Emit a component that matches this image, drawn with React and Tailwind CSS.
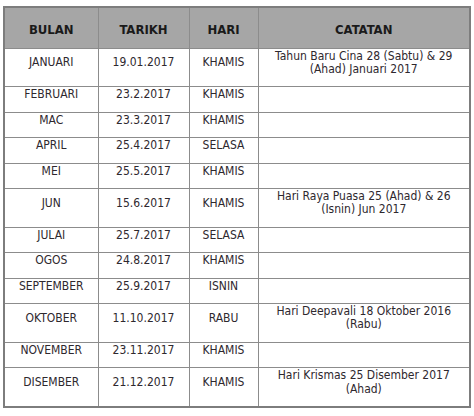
import React from 'react';

const rows = [
    { bulan: 'JANUARI', tarikh: '19.01.2017', hari: 'KHAMIS', catatan: ['Tahun Baru Cina 28 (Sabtu) & 29', '(Ahad) Januari 2017'] },
    { bulan: 'FEBRUARI', tarikh: '23.2.2017', hari: 'KHAMIS' },
    { bulan: 'MAC', tarikh: '23.3.2017', hari: 'KHAMIS' },
    { bulan: 'APRIL', tarikh: '25.4.2017', hari: 'SELASA' },
    { bulan: 'MEI', tarikh: '25.5.2017', hari: 'KHAMIS' },
    { bulan: 'JUN', tarikh: '15.6.2017', hari: 'KHAMIS', catatan: ['Hari Raya Puasa 25 (Ahad) & 26', '(Isnin) Jun 2017'] },
    { bulan: 'JULAI', tarikh: '25.7.2017', hari: 'SELASA' },
    { bulan: 'OGOS', tarikh: '24.8.2017', hari: 'KHAMIS' },
    { bulan: 'SEPTEMBER', tarikh: '25.9.2017', hari: 'ISNIN' },
    { bulan: 'OKTOBER', tarikh: '11.10.2017', hari: 'RABU', catatan: ['Hari Deepavali 18 Oktober 2016', '(Rabu)'] },
    { bulan: 'NOVEMBER', tarikh: '23.11.2017', hari: 'KHAMIS' },
    { bulan: 'DISEMBER', tarikh: '21.12.2017', hari: 'KHAMIS', catatan: ['Hari Krismas 25 Disember 2017', '(Ahad)'] },
];

const headers = ['BULAN', 'TARIKH', 'HARI', 'CATATAN'];

function App() {
    const cell = 'border border-[#8c8c8c] text-center align-middle pt-[1px] pb-[10px] px-1';

    return (
        <div className="w-[474px] h-[416px] bg-white pt-[6px] pl-[3px]" style={{ fontFamily: '"DejaVu Sans Condensed", "DejaVu Sans", sans-serif' }}>
            <table className="w-[466px] border-collapse border-2 border-[#7d7d7d] table-fixed text-[12px] leading-[13.4px] text-[#2e282e]">
                <colgroup>
                    <col className="w-[94px]" />
                    <col className="w-[91px]" />
                    <col className="w-[69px]" />
                    <col className="w-[212px]" />
                </colgroup>
                <thead>
                    <tr className="h-[41px] bg-[#a6a6a6]">
                        {headers.map((h, i) => (
                            <th key={i} className="border border-[#8c8c8c] text-center align-middle pt-[3px] text-[13px] font-bold text-[#1a1a1a]">
                                {h}
                            </th>
                        ))}
                    </tr>
                </thead>
                <tbody>
                    {rows.map((r, i) => (
                        <tr key={i}>
                            <td className={cell}>{r.bulan}</td>
                            <td className={cell}>{r.tarikh}</td>
                            <td className={cell}>{r.hari}</td>
                            <td className={cell}>
                                {r.catatan ? r.catatan.map((l, j) => <div key={j}>{l}</div>) : <div>&nbsp;</div>}
                            </td>
                        </tr>
                    ))}
                </tbody>
            </table>
        </div>
    );
}

export default App;
